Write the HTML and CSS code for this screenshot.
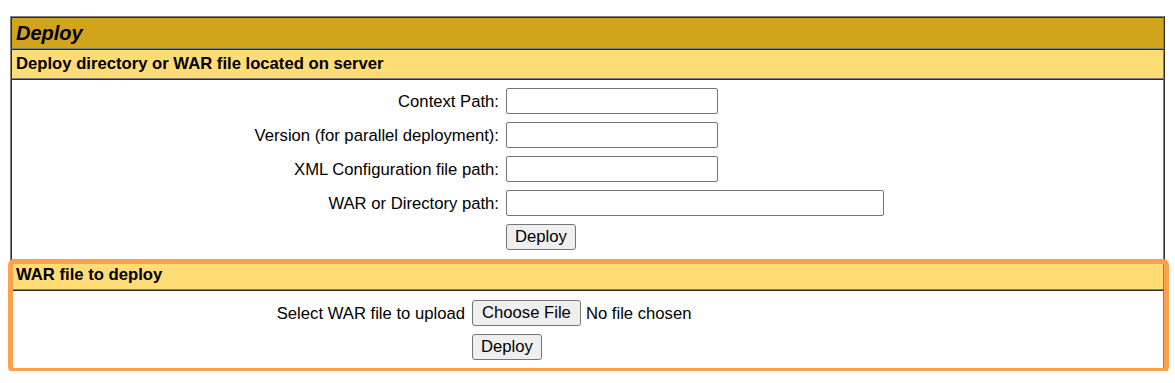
FILE: index.html
```html
<!DOCTYPE html>
<html lang="en">
<head>
<meta charset="utf-8">
<title>Deploy</title>
<link rel="stylesheet" href="styles.css">
</head>
<body>
<div class="page">
  <div class="panel">
    <div class="cell title">Deploy</div>
    <div class="cell header">Deploy directory or WAR file located on server</div>
    <div class="cell body">
      <div class="form form-server">
        <label class="lbl">Context Path:</label>
        <input class="txt" type="text">
        <label class="lbl">Version (for parallel deployment):</label>
        <input class="txt" type="text">
        <label class="lbl">XML Configuration file path:</label>
        <input class="txt" type="text">
        <label class="lbl">WAR or Directory path:</label>
        <input class="txt txt-wide" type="text">
        <button class="btn btn-col2" type="button">Deploy</button>
      </div>
    </div>
    <div class="cell header">WAR file to deploy</div>
    <div class="cell body body-upload">
      <div class="form form-upload">
        <label class="lbl">Select WAR file to upload</label>
        <div class="file">
          <button class="btn btn-file" type="button">Choose File</button>
          <span class="file-status">No file chosen</span>
        </div>
        <button class="btn btn-col2" type="button">Deploy</button>
      </div>
    </div>
  </div>
  <div class="highlight"></div>
</div>
</body>
</html>
```

FILE: styles.css
```css
html, body {
  margin: 0;
  padding: 0;
  background: #ffffff;
}

body {
  font-family: "Liberation Sans", Arial, sans-serif;
  font-size: 16.67px;
  color: #000000;
}

.page {
  position: relative;
  padding: 16px 10px 0;
}

.panel {
  border: 1px outset grey;
}

.cell {
  border: 1px inset grey;
}

.title {
  background: #D2A41C;
  font-size: 20px;
  font-weight: bold;
  font-style: italic;
  line-height: 24px;
  padding: 3px 3px 3px 4px;
}

.header {
  background: #FFDC75;
  font-weight: bold;
  line-height: 22px;
  padding: 3px 3px 3px 4px;
}

.body {
  background: #ffffff;
  padding: 8px 0 9px;
}

.body-upload {
  padding: 9px 0 9px;
}

.form {
  display: grid;
  column-gap: 7px;
  row-gap: 8px;
  align-items: center;
}

.form-server {
  grid-template-columns: 487px auto;
}

.form-upload {
  grid-template-columns: 453px auto;
}

.lbl {
  text-align: right;
  line-height: 19px;
}

.txt {
  box-sizing: border-box;
  width: 212px;
  height: 26px;
  margin: 0;
  padding: 1px 3px;
  border: 1px solid #767676;
  border-radius: 2px;
  font-family: "Liberation Sans", Arial, sans-serif;
  font-size: 16.67px;
  background: #ffffff;
}

.txt-wide {
  width: 378px;
}

.btn {
  box-sizing: border-box;
  height: 26px;
  margin: 0;
  padding: 0 8px;
  border: 1px solid #767676;
  border-radius: 3px;
  background: #efefef;
  color: #000000;
  font-family: "Liberation Sans", Arial, sans-serif;
  font-size: 16.67px;
  line-height: 22px;
  justify-self: start;
}

.btn-col2 {
  grid-column: 2;
}

.btn-file {
  padding: 0 9px;
}

.file {
  display: flex;
  align-items: center;
  gap: 5px;
}

.file-status {
  line-height: 19px;
}

.highlight {
  position: absolute;
  left: 8px;
  top: 259px;
  width: 1161px;
  height: 114px;
  box-sizing: border-box;
  border: 5px solid #FFA04D;
  border-radius: 6px;
  pointer-events: none;
}
```
